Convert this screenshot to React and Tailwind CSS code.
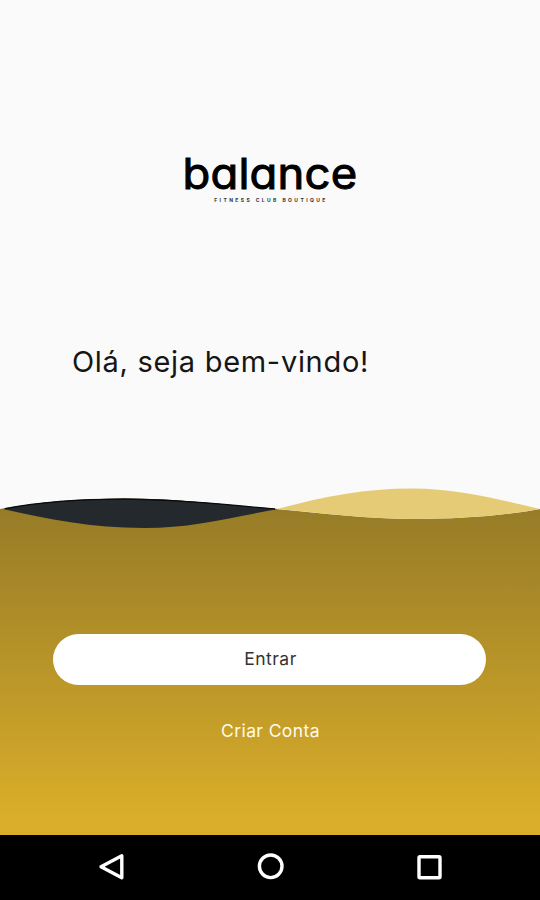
import React from "react";

const Logo = () => (
  <div className="flex flex-col items-center">
    <h1 className="text-[43px] leading-[46px] font-normal tracking-[0.2px] scale-x-[1.055] text-black [font-feature-settings:'cv11'] [-webkit-text-stroke:1px_black] [paint-order:stroke] [stroke-linejoin:round] whitespace-nowrap">
      balance
    </h1>
    <p className="mt-[1px] pl-[2px] text-[5px] leading-[6px] font-bold tracking-[2.4px] text-[#333] whitespace-nowrap">
      FITNESS CLUB BOUTIQUE
    </p>
  </div>
);

const Waves = () => (
  <svg viewBox="0 0 540 42" className="block w-full h-[42px]" aria-hidden="true">
    {/* area above the waves */}
    <path
      d="M0 0H540V21C502 28 460 31 415 31C370 31 320 25 275 21C225 17 180 10.500 125 10.500C80 10.500 38 14 0 21Z"
      fill="#fafafa"
    />
    <path
      d="M3 21C38 14 80 10.500 125 10.500C180 10.500 225 17 278 21C228 30 192 40 144 40C92 40 48 31 3 21Z"
      fill="#23292c"
    />
    <path
      d="M5 20.600C40 14 80 11.200 125 11.200C180 11.200 225 17 275 20.800"
      fill="none"
      stroke="#080a0b"
      strokeWidth="1.2"
    />
    <path
      d="M277 21C326 8 365 .5 412 .5C460 .5 504 13 540 21C502 28 460 31 415 31C367 31 322 25 277 21Z"
      fill="#e5cb76"
    />
  </svg>
);

const NavigationBar = () => (
  <nav className="h-[65px] bg-black flex">
    <button className="w-[222px] flex justify-center items-start pt-[18px]" aria-label="Voltar">
      <svg width="28" height="28" fill="none" stroke="white" strokeWidth="3.4" strokeLinejoin="round">
        <path d="M24.800 2.800V24.800L4 13.700Z" />
      </svg>
    </button>
    <button className="w-[97px] flex justify-center items-start pt-[17px]" aria-label="Início">
      <svg width="28" height="28" fill="none" stroke="white" strokeWidth="3.4">
        <circle cx="13.700" cy="14.300" r="11.300" />
      </svg>
    </button>
    <button className="w-[221px] flex justify-center items-start pt-[18px]" aria-label="Recentes">
      <svg width="28" height="28" fill="none" stroke="white" strokeWidth="3.4">
        <rect x="3" y="3.700" width="21" height="21" rx="1" />
      </svg>
    </button>
  </nav>
);

const App = () => {
  return (
    <div className="w-full h-screen flex flex-col overflow-hidden bg-[#fafafa] font-['Inter',sans-serif]">
      <header className="h-[488px] shrink-0 pt-[150px]">
        <Logo />
        <h2 className="mt-[139px] pl-[72px] text-[29px] leading-[40px] tracking-[0.7px] text-[#161616] whitespace-nowrap">
          Olá, seja bem-vindo!
        </h2>
      </header>

      <main className="flex-1 flex flex-col bg-linear-to-b from-[#967b27] from-5% to-[#daae29] to-95%">
        <Waves />
        <div className="flex flex-col items-center pl-[53px] pr-[54px] pt-[104px]">
          <button className="w-full h-[51px] rounded-full bg-white pl-[2px] text-[17.500px] tracking-[0.5px] text-[#333]">
            Entrar
          </button>
          <button className="mt-[32px] h-[28px] pl-[2px] text-[17.500px] tracking-[0.4px] text-[#fffbea]">
            Criar Conta
          </button>
        </div>
      </main>

      <NavigationBar />
    </div>
  );
};

export default App;
